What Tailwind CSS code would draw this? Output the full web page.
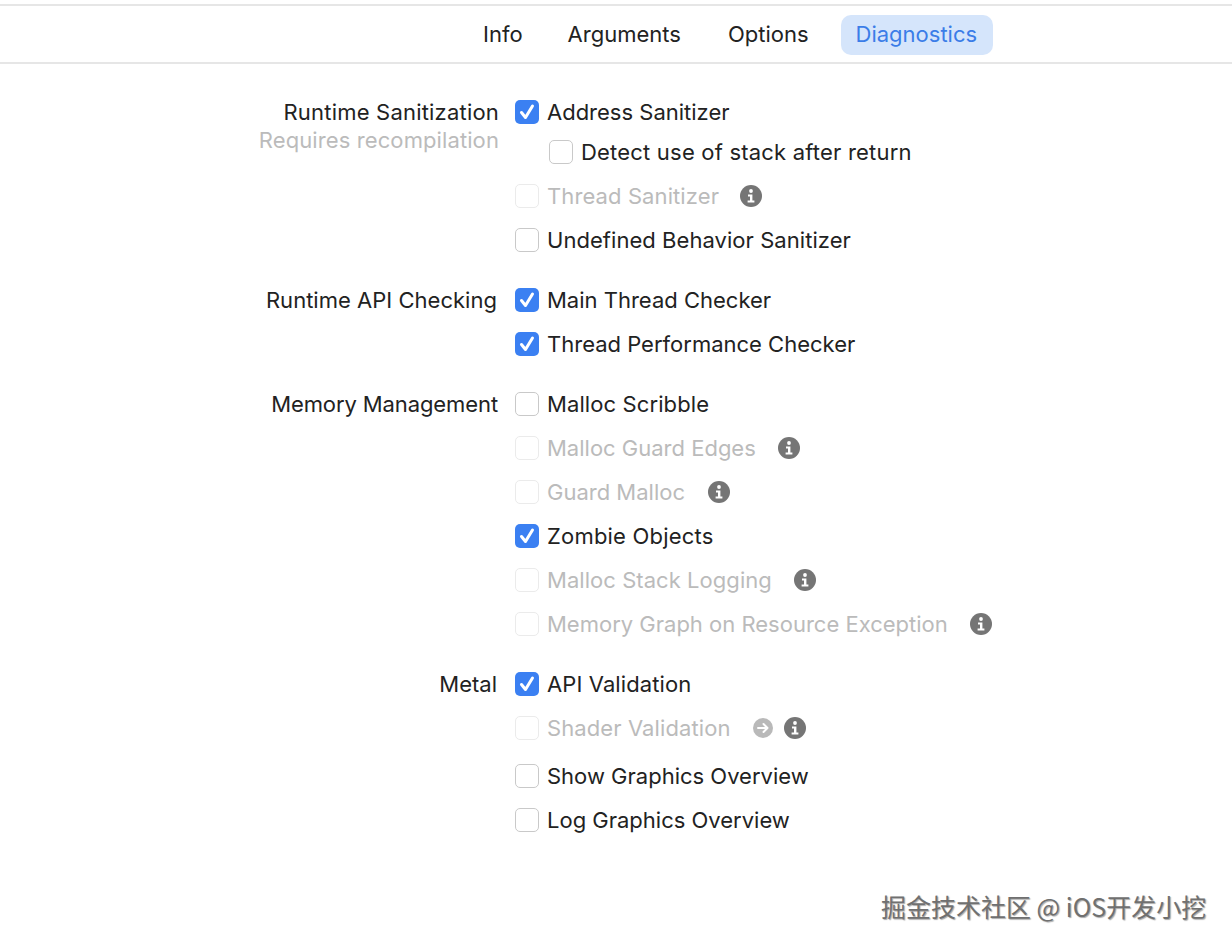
<!DOCTYPE html>
<html lang="en">

<head>
    <meta charset="UTF-8">
    <title>Diagnostics</title>
    <script src="https://cdn.jsdelivr.net/npm/@tailwindcss/browser@4"></script>
</head>

<body class="bg-white font-['Inter','Liberation_Sans',sans-serif] text-[22px] text-[#222]">
    <div class="relative w-[1232px] h-[946px] overflow-hidden pt-1">
        <!-- Tab bar -->
        <div class="h-[60px] border-y-2 border-[#e6e6e6] flex items-center pl-[483px]">
            <span>Info</span>
            <span class="ml-[45px]">Arguments</span>
            <span class="ml-[47px]">Options</span>
            <span class="ml-[32px] mt-[2px] pb-[2px] pl-[15px] pr-[16px] h-10 flex items-center rounded-[10px] bg-[#d5e5fb] text-[#3b7de8]">Diagnostics</span>
        </div>

        <div class="pt-[26px] grid grid-cols-[498px_1fr] gap-x-[17px]">
            <!-- Runtime Sanitization -->
            <div class="text-right -mr-px">
                <div class="h-11 flex items-center justify-end tracking-[0.2px]">Runtime Sanitization</div>
                <div class="text-[#bbb] -mt-[10px] tracking-[0.1px]">Requires recompilation</div>
            </div>
            <div>
                <div class="h-11 flex items-center">
                    <span class="w-6 h-6 rounded-[5px] bg-[#3b80f2] flex items-center justify-center"><svg width="20" height="20" viewBox="0 0 20 20" fill="none" stroke="#fff" stroke-width="3" stroke-linecap="round" stroke-linejoin="round"><path d="M4.500 10.500l4 5L15.500 4" /></svg></span>
                    <span class="ml-2">Address Sanitizer</span>
                </div>
                <div class="h-9 flex items-center pl-[34px]">
                    <span class="w-6 h-6 rounded-[5px] border border-[#c9c9c9]"></span>
                    <span class="ml-2 tracking-[0.2px]">Detect use of stack after return</span>
                </div>
                <div class="mt-1 h-11 flex items-center text-[#bbb]">
                    <span class="w-6 h-6 rounded-[5px] border border-[#ebebeb]"></span>
                    <span class="ml-2 tracking-[0.1px]">Thread Sanitizer</span>
                    <span class="ml-[21px] w-[22px] h-[22px] rounded-full bg-[#757575] flex items-center justify-center"><svg width="12" height="16" viewBox="0 0 12 16" fill="#fff"><circle cx="6" cy="3" r="1.9" /><path d="M3 6.5h4.4v6H9.4V14.500H2.600V12.500H5V8.500H3z" /></svg></span>
                </div>
                <div class="h-11 flex items-center">
                    <span class="w-6 h-6 rounded-[5px] border border-[#c9c9c9]"></span>
                    <span class="ml-2 tracking-[0.05px]">Undefined Behavior Sanitizer</span>
                </div>
            </div>

            <!-- Runtime API Checking -->
            <div class="mt-4 h-11 flex items-center justify-end pr-px tracking-[0.02px]">Runtime API Checking</div>
            <div class="mt-4">
                <div class="h-11 flex items-center">
                    <span class="w-6 h-6 rounded-[5px] bg-[#3b80f2] flex items-center justify-center"><svg width="20" height="20" viewBox="0 0 20 20" fill="none" stroke="#fff" stroke-width="3" stroke-linecap="round" stroke-linejoin="round"><path d="M4.500 10.500l4 5L15.500 4" /></svg></span>
                    <span class="ml-2">Main Thread Checker</span>
                </div>
                <div class="h-11 flex items-center">
                    <span class="w-6 h-6 rounded-[5px] bg-[#3b80f2] flex items-center justify-center"><svg width="20" height="20" viewBox="0 0 20 20" fill="none" stroke="#fff" stroke-width="3" stroke-linecap="round" stroke-linejoin="round"><path d="M4.500 10.500l4 5L15.500 4" /></svg></span>
                    <span class="ml-2">Thread Performance Checker</span>
                </div>
            </div>

            <!-- Memory Management -->
            <div class="mt-4 h-11 flex items-center justify-end tracking-[-0.1px]">Memory Management</div>
            <div class="mt-4">
                <div class="h-11 flex items-center">
                    <span class="w-6 h-6 rounded-[5px] border border-[#c9c9c9]"></span>
                    <span class="ml-2 tracking-[0.1px]">Malloc Scribble</span>
                </div>
                <div class="h-11 flex items-center text-[#bbb]">
                    <span class="w-6 h-6 rounded-[5px] border border-[#ebebeb]"></span>
                    <span class="ml-2">Malloc Guard Edges</span>
                    <span class="ml-[22px] w-[22px] h-[22px] rounded-full bg-[#757575] flex items-center justify-center"><svg width="12" height="16" viewBox="0 0 12 16" fill="#fff"><circle cx="6" cy="3" r="1.9" /><path d="M3 6.5h4.4v6H9.4V14.500H2.600V12.500H5V8.500H3z" /></svg></span>
                </div>
                <div class="h-11 flex items-center text-[#bbb]">
                    <span class="w-6 h-6 rounded-[5px] border border-[#ebebeb]"></span>
                    <span class="ml-2">Guard Malloc</span>
                    <span class="ml-[23px] w-[22px] h-[22px] rounded-full bg-[#757575] flex items-center justify-center"><svg width="12" height="16" viewBox="0 0 12 16" fill="#fff"><circle cx="6" cy="3" r="1.9" /><path d="M3 6.5h4.4v6H9.4V14.500H2.600V12.500H5V8.500H3z" /></svg></span>
                </div>
                <div class="h-11 flex items-center">
                    <span class="w-6 h-6 rounded-[5px] bg-[#3b80f2] flex items-center justify-center"><svg width="20" height="20" viewBox="0 0 20 20" fill="none" stroke="#fff" stroke-width="3" stroke-linecap="round" stroke-linejoin="round"><path d="M4.500 10.500l4 5L15.500 4" /></svg></span>
                    <span class="ml-2 tracking-[0.2px]">Zombie Objects</span>
                </div>
                <div class="h-11 flex items-center text-[#bbb]">
                    <span class="w-6 h-6 rounded-[5px] border border-[#ebebeb]"></span>
                    <span class="ml-2 tracking-[0.05px]">Malloc Stack Logging</span>
                    <span class="ml-[22px] w-[22px] h-[22px] rounded-full bg-[#757575] flex items-center justify-center"><svg width="12" height="16" viewBox="0 0 12 16" fill="#fff"><circle cx="6" cy="3" r="1.9" /><path d="M3 6.5h4.4v6H9.4V14.500H2.600V12.500H5V8.500H3z" /></svg></span>
                </div>
                <div class="h-11 flex items-center text-[#bbb]">
                    <span class="w-6 h-6 rounded-[5px] border border-[#ebebeb]"></span>
                    <span class="ml-2">Memory Graph on Resource Exception</span>
                    <span class="ml-[22px] w-[22px] h-[22px] rounded-full bg-[#757575] flex items-center justify-center"><svg width="12" height="16" viewBox="0 0 12 16" fill="#fff"><circle cx="6" cy="3" r="1.9" /><path d="M3 6.5h4.4v6H9.4V14.500H2.600V12.500H5V8.500H3z" /></svg></span>
                </div>
            </div>

            <!-- Metal -->
            <div class="mt-4 h-11 flex items-center justify-end pr-px">Metal</div>
            <div class="mt-4">
                <div class="h-11 flex items-center">
                    <span class="w-6 h-6 rounded-[5px] bg-[#3b80f2] flex items-center justify-center"><svg width="20" height="20" viewBox="0 0 20 20" fill="none" stroke="#fff" stroke-width="3" stroke-linecap="round" stroke-linejoin="round"><path d="M4.500 10.500l4 5L15.500 4" /></svg></span>
                    <span class="ml-2 tracking-[0.1px]">API Validation</span>
                </div>
                <div class="h-11 flex items-center text-[#bbb]">
                    <span class="w-6 h-6 rounded-[5px] border border-[#ebebeb]"></span>
                    <span class="ml-2 tracking-[0.1px]">Shader Validation</span>
                    <span class="ml-[22px] w-5 h-5 rounded-full bg-[#b9b9b9] flex items-center justify-center"><svg width="14" height="14" viewBox="0 0 14 14" fill="none" stroke="#fff" stroke-width="2" stroke-linecap="round" stroke-linejoin="round"><path d="M2 7h9M7.500 3l4 4-4 4" /></svg></span>
                    <span class="ml-[11px] w-[22px] h-[22px] rounded-full bg-[#757575] flex items-center justify-center"><svg width="12" height="16" viewBox="0 0 12 16" fill="#fff"><circle cx="6" cy="3" r="1.9" /><path d="M3 6.5h4.4v6H9.4V14.500H2.600V12.500H5V8.500H3z" /></svg></span>
                </div>
                <div class="mt-1 h-11 flex items-center">
                    <span class="w-6 h-6 rounded-[5px] border border-[#c9c9c9]"></span>
                    <span class="ml-2">Show Graphics Overview</span>
                </div>
                <div class="h-11 flex items-center">
                    <span class="w-6 h-6 rounded-[5px] border border-[#c9c9c9]"></span>
                    <span class="ml-2">Log Graphics Overview</span>
                </div>
            </div>
        </div>

        <!-- Watermark -->
        <div class="absolute left-[881px] top-[890px] text-[25px] leading-[32px] whitespace-nowrap text-[#707070] [text-shadow:1px_1px_1px_#aaa] font-['Noto_Sans_CJK_SC','Noto_Sans',sans-serif]">掘金技术社区 @ iOS开发小挖</div>
    </div>
</body>

</html>
